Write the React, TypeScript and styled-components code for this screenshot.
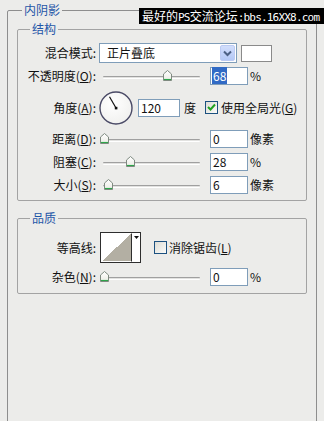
import React from 'react';
import styled, { createGlobalStyle } from 'styled-components';

const GlobalStyle = createGlobalStyle`
  html, body {
    margin: 0;
    padding: 0;
    background: #ececea;
    overflow: hidden;
  }
  body {
    font-family: "Noto Sans CJK SC", "Noto Sans", sans-serif;
    font-size: 12px;
    color: #111;
  }
`

const Page = styled.div`
  position: relative;
  width: 324px;
  height: 421px;
  overflow: hidden;
  padding-top: 2px;
  box-sizing: border-box;
`

const Watermark = styled.div`
  position: absolute;
  top: 8px;
  left: 139px;
  right: 0;
  height: 16px;
  padding-left: 3px;
  background: #000;
  color: #fff;
  font-size: 12px;
  line-height: 16px;
  white-space: nowrap;
`

const Latin = styled.span`
  font-family: "DejaVu Sans Mono", monospace;
  font-size: 11px;
  letter-spacing: -0.8px;
`

const OuterGroup = styled.fieldset`
  margin: 0 0 0 7px;
  width: 310px;
  min-height: 440px;
  box-sizing: border-box;
  border: 1px solid #8e8e8e;
  border-radius: 2px;
  padding: 3px 9px 0 9px;
  min-width: 0;
`

const Group = styled.fieldset<{ $gap?: number; $bottom?: number }>`
  margin: ${({ $gap }) => $gap ?? 0}px 0 0 0;
  box-sizing: border-box;
  border: 1px solid #a3a3a3;
  border-radius: 2px;
  padding: 6px 0 ${({ $bottom }) => $bottom ?? 5}px 0;
  min-width: 0;
`

const Title = styled.legend<{ $indent: number }>`
  margin-left: ${({ $indent }) => $indent}px;
  padding: 0 2px;
  line-height: 16px;
  font-size: 12px;
  color: #1f56a8;
`

const Rows = styled.div<{ $gap: number }>`
  display: flex;
  flex-direction: column;
  gap: ${({ $gap }) => $gap}px;
`

const Row = styled.div<{ $h?: number }>`
  display: flex;
  align-items: center;
  height: ${({ $h }) => $h ?? 20}px;
`

const Label = styled.div`
  width: 78px;
  flex-shrink: 0;
  text-align: right;
  white-space: nowrap;
  line-height: 16px;
  color: #111;

  u {
    text-underline-offset: 1px;
  }
`

const Select = styled.div`
  margin-left: 3px;
  width: 138px;
  height: 20px;
  box-sizing: border-box;
  border: 1px solid #7f9db9;
  background: #fff;
  display: flex;
  align-items: center;
  padding-left: 7px;
  line-height: 16px;
`

const DropButton = styled.div`
  margin-left: auto;
  margin-right: 1px;
  width: 15px;
  height: 16px;
  box-sizing: border-box;
  border: 1px solid #bccbf3;
  border-radius: 2px;
  background: linear-gradient(#d2defc, #b4c8f6);
  display: flex;
  align-items: center;
  justify-content: center;
`

const Swatch = styled.div`
  margin-left: 4px;
  width: 31px;
  height: 17px;
  box-sizing: border-box;
  border: 1px solid #8a8a8a;
  background: #fff;
`

const SliderBox = styled.div`
  position: relative;
  margin-left: 3px;
  width: 105px;
  height: 20px;
  flex-shrink: 0;
`

const Track = styled.div`
  position: absolute;
  left: 4px;
  right: 4px;
  top: 10px;
  height: 3px;
  box-sizing: border-box;
  border-top: 1px solid #a0a0a0;
  border-bottom: 1px solid #fff;
  border-radius: 1px;
  background: #e2e2e0;
`

const Thumb = styled.svg`
  position: absolute;
  top: 4px;
  width: 9px;
  height: 11px;
`

const Field = styled.div<{ $w?: number; $ml?: number }>`
  margin-left: ${({ $ml }) => $ml ?? 6}px;
  width: ${({ $w }) => $w ?? 38}px;
  height: 18px;
  box-sizing: border-box;
  border: 1px solid #7f9db9;
  background: #fff;
  padding-left: 2px;
  line-height: 16px;
  flex-shrink: 0;
`

const Selected = styled.span`
  margin-left: -1px;
  padding: 0 1px;
  background: #316ac5;
  color: #fff;
`

const Unit = styled.span<{ $ml?: number }>`
  margin-left: ${({ $ml }) => $ml ?? 2}px;
  white-space: nowrap;
  line-height: 16px;
`

const Dial = styled.svg`
  margin-left: 3px;
  width: 34px;
  height: 34px;
  flex-shrink: 0;
`

const CheckBox = styled.div<{ $ml: number }>`
  margin-left: ${({ $ml }) => $ml}px;
  width: 13px;
  height: 13px;
  box-sizing: border-box;
  border: 1px solid #1c5180;
  background: linear-gradient(135deg, #dcdcd5, #fbfbf9);
  display: flex;
  align-items: center;
  justify-content: center;
  flex-shrink: 0;
`

const CheckText = styled.span<{ $ml: number }>`
  margin-left: ${({ $ml }) => $ml}px;
  white-space: nowrap;
  line-height: 16px;

  u {
    text-underline-offset: 1px;
  }
`

const Contour = styled.div`
  margin-left: 4px;
  width: 41px;
  height: 31px;
  box-sizing: border-box;
  border: 1px solid #2e2e2e;
  display: flex;
  background: #fff;
`

const ContourPreview = styled.div`
  width: 31px;
  height: 100%;
  box-sizing: border-box;
  border: 1px solid #fff;
  border-right: 1px solid #2e2e2e;
  background: linear-gradient(to bottom right, #ffffff 50%, #b3afa3 50%);
`

const ContourArrow = styled.div`
  flex: 1;
  display: flex;
  justify-content: center;
  padding-top: 3px;
`

const Slider = ({ pct }: { pct: number }) => (
  <SliderBox>
    <Track />
    <Thumb viewBox="0 0 9 11" style={{ left: 5 + pct * 94 - 4.5 }}>
      <defs>
        <linearGradient id="thumbFill" x1="0" y1="0" x2="0" y2="1">
          <stop offset="0" stopColor="#ffffff" />
          <stop offset="0.7" stopColor="#f1f1ec" />
          <stop offset="1" stopColor="#bfe6c4" />
        </linearGradient>
      </defs>
      <path d="M0.5 4 L4.5 0.5 L8.5 4 L8.5 10.5 L0.5 10.5 Z" fill="url(#thumbFill)" stroke="#7f8a80" strokeWidth="1" />
      <path d="M1 9.5 H8" stroke="#2ea44a" strokeWidth="1" />
    </Thumb>
  </SliderBox>
);

const Check = ({ checked, ml }: { checked?: boolean; ml: number }) => (
  <CheckBox $ml={ml}>
    {checked && (
      <svg width="9" height="9" viewBox="0 0 9 9">
        <path d="M1 4 L3.5 6.5 L8 1.5" fill="none" stroke="#21a121" strokeWidth="2" />
      </svg>
    )}
  </CheckBox>
);

const SliderRow = ({ label, pct, value, unit }: { label: React.ReactNode; pct: number; value: React.ReactNode; unit: string }) => (
  <Row>
    <Label>{label}</Label>
    <Slider pct={pct} />
    <Field>{value}</Field>
    <Unit>{unit}</Unit>
  </Row>
);

const App = () => {
  const angle = (120 * Math.PI) / 180;
  const hx = 17 + 13 * Math.cos(angle);
  const hy = 17 - 13 * Math.sin(angle);

  return (
    <Page>
      <GlobalStyle />
      <OuterGroup>
        <Title $indent={5}>内阴影</Title>

        <Group $bottom={5}>
          <Title $indent={12}>结构</Title>
          <Rows $gap={3}>
            <Row>
              <Label>混合模式:</Label>
              <Select>
                正片叠底
                <DropButton>
                  <svg width="9" height="7" viewBox="0 0 9 7">
                    <path d="M1 1.5 L4.5 5 L8 1.5" fill="none" stroke="#4d6185" strokeWidth="2" />
                  </svg>
                </DropButton>
              </Select>
              <Swatch />
            </Row>

            <SliderRow
              label={<>不透明度(<u>O</u>):</>}
              pct={0.68}
              value={<Selected>68</Selected>}
              unit="%"
            />

            <Row $h={37}>
              <Label>角度(<u>A</u>):</Label>
              <Dial viewBox="0 0 34 34">
                <defs>
                  <radialGradient id="dialFill" cx="0.4" cy="0.35" r="0.7">
                    <stop offset="0" stopColor="#ffffff" />
                    <stop offset="1" stopColor="#f0f0ee" />
                  </radialGradient>
                </defs>
                <circle cx="17" cy="17" r="16" fill="url(#dialFill)" stroke="#4a4a66" strokeWidth="1.4" />
                <line x1="17" y1="17" x2={hx} y2={hy} stroke="#111" strokeWidth="1.2" />
                <rect x="15.8" y="15.8" width="2.6" height="2.6" fill="#111" />
              </Dial>
              <Field $w={42} $ml={5}>120</Field>
              <Unit $ml={4}>度</Unit>
              <Check checked ml={9} />
              <CheckText $ml={3}>使用全局光(<u>G</u>)</CheckText>
            </Row>

            <SliderRow label={<>距离(<u>D</u>):</>} pct={0} value="0" unit="像素" />
            <SliderRow label={<>阻塞(<u>C</u>):</>} pct={0.28} value="28" unit="%" />
            <SliderRow label={<>大小(<u>S</u>):</>} pct={0.05} value="6" unit="像素" />
          </Rows>
        </Group>

        <Group $gap={9} $bottom={6}>
          <Title $indent={12}>品质</Title>
          <Rows $gap={4}>
            <Row $h={31}>
              <Label>等高线:</Label>
              <Contour>
                <ContourPreview />
                <ContourArrow>
                  <svg width="5" height="3" viewBox="0 0 5 3">
                    <path d="M0 0 H5 L2.5 3 Z" fill="#111" />
                  </svg>
                </ContourArrow>
              </Contour>
              <Check ml={13} />
              <CheckText $ml={2}>消除锯齿(<u>L</u>)</CheckText>
            </Row>
            <SliderRow label={<>杂色(<u>N</u>):</>} pct={0} value="0" unit="%" />
          </Rows>
        </Group>
      </OuterGroup>

      <Watermark>
        最好的<Latin>PS</Latin>交流论坛<Latin>:bbs.16XX8.com</Latin>
      </Watermark>
    </Page>
  );
};

export default App;
